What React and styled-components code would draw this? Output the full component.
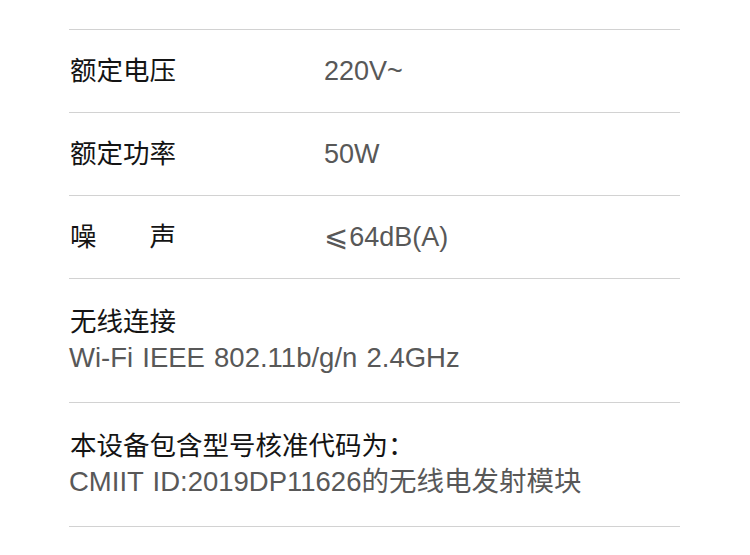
import React from "react";
import styled, { createGlobalStyle } from "styled-components";

const Global = createGlobalStyle`
  html, body { margin: 0; padding: 0; background: #ffffff; }
  body {
    font-family: "Liberation Sans", "Noto Sans CJK SC", "DejaVu Sans", sans-serif;
    -webkit-font-smoothing: antialiased;
  }
`;

const Sheet = styled.section`
  width: 611px;
  margin: 0 0 0 69px;
  padding-top: 29px;
  padding-bottom: 20px;
`;

const Row = styled.div`
  border-top: 1px solid #d2d2d2;
  &:last-child { border-bottom: 1px solid #d2d2d2; }
`;

const SpecRow = styled(Row)`
  height: 82px;
  display: grid;
  grid-template-columns: 255px 1fr;
  align-items: center;
`;

const StackRow = styled(Row)`
  display: flex;
  flex-direction: column;
  padding: 22px 0 25px;
`;

const Label = styled.div`
  font-family: "Noto Sans CJK SC", "Liberation Sans", sans-serif;
  font-size: 26.5px;
  line-height: 38px;
  color: #141414;
  padding-left: 1px;
  margin-top: ${(p) => (p.$inline ? "-4px" : "0")};
  ${(p) => p.$spread && `
    width: 106px;
    text-align: justify;
    text-align-last: justify;
  `}
`;

const Value = styled.div`
  font-family: "Liberation Sans", "DejaVu Sans", "Noto Sans CJK SC", sans-serif;
  font-size: ${(p) => p.$size || 27}px;
  line-height: 38px;
  word-spacing: 1.5px;
  color: #585858;
  margin-top: ${(p) => (p.$inline ? "-1px" : "0")};
`;

const Sym = styled.span`
  font-family: "DejaVu Sans", "Noto Sans CJK SC", sans-serif;
  font-size: 29px;
  margin-right: 1px;
`;

const specs = [
  { label: "额定电压", value: "220V~" },
  { label: "额定功率", value: "50W" },
  { label: "噪声", value: "64dB(A)", sym: "⩽", spread: true },
];

const stacks = [
  { title: "无线连接", sub: "Wi-Fi IEEE 802.11b/g/n 2.4GHz" },
  { title: "本设备包含型号核准代码为：", sub: "CMIIT ID:2019DP11626的无线电发射模块" },
];

export default function App() {
  return (
    <>
      <Global />
      <Sheet>
        {specs.map((s) => (
          <SpecRow key={s.label}>
            <Label $inline $spread={s.spread}>{s.label}</Label>
            <Value $inline>
              {s.sym && <Sym>{s.sym}</Sym>}
              {s.value}
            </Value>
          </SpecRow>
        ))}
        {stacks.map((s) => (
          <StackRow key={s.title}>
            <Label>{s.title}</Label>
            <Value $size={27.5}>{s.sub}</Value>
          </StackRow>
        ))}
      </Sheet>
    </>
  );
}
